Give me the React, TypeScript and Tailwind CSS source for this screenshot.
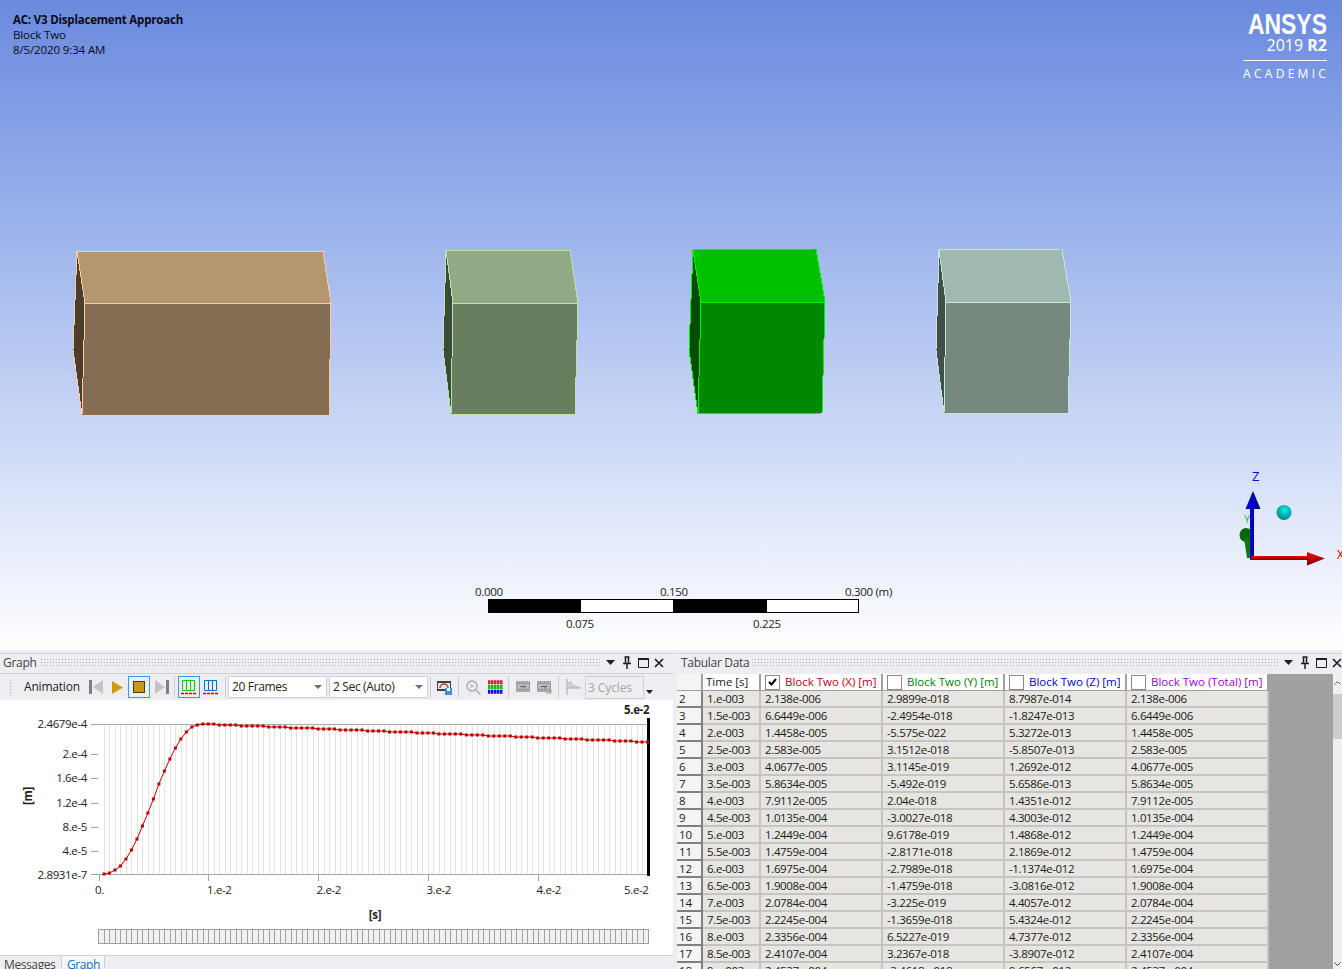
const rows = [
  ["2", "1.e-003", "2.138e-006", "2.9899e-018", "8.7987e-014", "2.138e-006"],
  ["3", "1.5e-003", "6.6449e-006", "-2.4954e-018", "-1.8247e-013", "6.6449e-006"],
  ["4", "2.e-003", "1.4458e-005", "-5.575e-022", "5.3272e-013", "1.4458e-005"],
  ["5", "2.5e-003", "2.583e-005", "3.1512e-018", "-5.8507e-013", "2.583e-005"],
  ["6", "3.e-003", "4.0677e-005", "3.1145e-019", "1.2692e-012", "4.0677e-005"],
  ["7", "3.5e-003", "5.8634e-005", "-5.492e-019", "5.6586e-013", "5.8634e-005"],
  ["8", "4.e-003", "7.9112e-005", "2.04e-018", "1.4351e-012", "7.9112e-005"],
  ["9", "4.5e-003", "1.0135e-004", "-3.0027e-018", "4.3003e-012", "1.0135e-004"],
  ["10", "5.e-003", "1.2449e-004", "9.6178e-019", "1.4868e-012", "1.2449e-004"],
  ["11", "5.5e-003", "1.4759e-004", "-2.8171e-018", "2.1869e-012", "1.4759e-004"],
  ["12", "6.e-003", "1.6975e-004", "-2.7989e-018", "-1.1374e-012", "1.6975e-004"],
  ["13", "6.5e-003", "1.9008e-004", "-1.4759e-018", "-3.0816e-012", "1.9008e-004"],
  ["14", "7.e-003", "2.0784e-004", "-3.225e-019", "4.4057e-012", "2.0784e-004"],
  ["15", "7.5e-003", "2.2245e-004", "-1.3659e-018", "5.4324e-012", "2.2245e-004"],
  ["16", "8.e-003", "2.3356e-004", "6.5227e-019", "4.7377e-012", "2.3356e-004"],
  ["17", "8.5e-003", "2.4107e-004", "3.2367e-018", "-3.8907e-012", "2.4107e-004"],
  ["18", "9.e-003", "2.4537e-004", "-3.4618e-018", "9.6567e-012", "2.4537e-004"],
]

const rise = [2.8931e-7, 2.138e-6, 6.6449e-6, 1.4458e-5, 2.583e-5, 4.0677e-5, 5.8634e-5, 7.9112e-5, 1.0135e-4, 1.2449e-4, 1.4759e-4, 1.6975e-4, 1.9008e-4, 2.0784e-4, 2.2245e-4, 2.3356e-4, 2.4107e-4, 2.4537e-4, 2.4679e-4]

const px = (i: number) => 104 + i * 5.49
const yOf = (v: number) => 874.5 - (v / 2.4679e-4) * 150.5

// total displacement points, 0.5 ms apart
const points = Array.from({ length: 100 }, (_, i) => {
  const x = px(i)
  if (i < rise.length) return [x, Math.round(yOf(rise[i]))]
  return [x, Math.round(724 + ((x - px(18)) / (648 - px(18))) * 18)]
})

const grid = "grid grid-cols-[26px_58px_122px_122px_122px_142px]"
const cell = "h-[17px] pl-[4px] leading-[16px] tracking-[-0.35px] bg-[#e6e5e1] border-r-2 border-b-2 border-[#c4c4c0] overflow-hidden whitespace-nowrap"

function Triangle() {
  return (
    <svg width="9" height="5" viewBox="0 0 9 5">
      <path d="M0 0h9L4.500 5z" fill="#1e1e1e" />
    </svg>
  )
}

function PanelTitle({ title, start, width, dots }: { title: string; start: string; width: string; dots: string }) {
  return (
    <div className="h-[17px] flex items-center text-[12px] text-[#444]">
      <span className={`${start} ${width} mr-[5px] shrink-0 whitespace-nowrap tracking-[-0.3px]`}>{title}</span>
      <div className={`${dots} shrink-0 h-[9px] bg-[radial-gradient(#a8aab4_0.7px,transparent_0.9px)] bg-size-[3px_3px]`} />
      <div className="ml-[5px]"><Triangle /></div>
      <svg className="ml-[7px]" width="10" height="13" viewBox="0 0 10 13">
        <path d="M2.500 1h5M3.500 1v6M6.500 1v6M1 7.500h8M5 8v5" stroke="#1e1e1e" strokeWidth="1.500" fill="none" />
      </svg>
      <svg className="ml-[6px]" width="11" height="10" viewBox="0 0 11 10">
        <path d="M.5 1.500h10v8H.5z" stroke="#1e1e1e" fill="none" />
        <path d="M0 1h11" stroke="#1e1e1e" strokeWidth="2" />
      </svg>
      <svg className="ml-[5px]" width="10" height="10" viewBox="0 0 10 10">
        <path d="M1 1l8 8M9 1l-8 8" stroke="#1e1e1e" strokeWidth="1.700" />
      </svg>
    </div>
  )
}

function Sep({ className }: { className: string }) {
  return <div className={`w-px h-[22px] bg-[#ccced8] ${className}`} />
}

function Select({ label, className }: { label: string; className: string }) {
  return (
    <div className={`w-[99px] h-[22px] bg-white border border-[#ccced8] flex items-center justify-between pl-[3px] pr-[4px] ${className}`}>
      <span className="text-[12px] text-[#222] tracking-[-0.35px]">{label}</span>
      <svg width="8" height="4" viewBox="0 0 8 4"><path d="M0 0h8L4 4z" fill="#707070" /></svg>
    </div>
  )
}

function Film({ className, extra }: { className: string; extra?: boolean }) {
  return (
    <svg className={className} width="15" height="14" viewBox="0 0 15 14">
      <rect x="0" y="1" width="14" height="11" fill="#9a9a9a" />
      <path d="M0 2h14M0 11h14" stroke="#d8d8d8" strokeDasharray="1 1" />
      <rect x="1" y="4" width="12" height="5" fill="#b8b8b8" />
      <path d="M4 6.500h6M8 6.500v2" stroke="#666" />
      {extra && <path d="M9 13h5v-3" stroke="#999" fill="none" />}
    </svg>
  )
}

function Bars({ color }: { color: string }) {
  return (
    <svg width="16" height="16" viewBox="0 0 16 16">
      <path d="M1.500 1.500h12v10h-12zM5.500 1.500v10M9.500 1.500v10" stroke={color} fill="none" />
      <path d="M0 14.500h16" stroke="#e00000" strokeDasharray="3 1" strokeWidth="1.500" />
    </svg>
  )
}

function Toolbar() {
  return (
    <div className="h-[26px] flex items-center bg-[#eeeef2] pl-[9px]">
      <div className="w-[3px] h-[17px] bg-[radial-gradient(#a0a2ac_0.7px,transparent_0.9px)] bg-size-[3px_3px]" />
      <span className="ml-[12px] w-[57px] text-[12px] text-[#222] tracking-[-0.2px] -mt-px">Animation</span>
      <svg className="ml-[8px]" width="14" height="14" viewBox="0 0 14 14">
        <rect x="0" y="0" width="3" height="14" fill="#808080" />
        <path d="M14 0v14L4 7z" fill="#c4c4c4" />
      </svg>
      <svg className="ml-[9px]" width="11" height="13" viewBox="0 0 11 13">
        <path d="M0 0l11 6.500L0 13z" fill="#d09a10" />
      </svg>
      <div className="ml-[5px] w-[22px] h-[22px] border border-[#3399ff] flex items-center justify-center">
        <div className="w-[12px] h-[12px] bg-[#c8981a] border border-[#4a3c10]" />
      </div>
      <svg className="ml-[5px]" width="14" height="14" viewBox="0 0 14 14">
        <path d="M0 0v14l10-7z" fill="#c4c4c4" />
        <rect x="11" y="0" width="3" height="14" fill="#808080" />
      </svg>
      <Sep className="ml-[5px]" />
      <div className="ml-[3px] w-[22px] h-[22px] border border-[#3399ff] flex items-center justify-center">
        <Bars color="#00d000" />
      </div>
      <div className="ml-[3px] w-[16px]"><Bars color="#0070d0" /></div>
      <Sep className="ml-[6px]" />
      <Select label="20 Frames" className="ml-[2px]" />
      <Select label="2 Sec (Auto)" className="ml-[2px]" />
      <Sep className="ml-[2px]" />
      <svg className="ml-[6px]" width="15" height="15" viewBox="0 0 15 15">
        <rect x="0" y="1" width="14" height="10" fill="#404040" />
        <rect x="1" y="3" width="12" height="6" fill="#e8e8e8" />
        <path d="M3 8a4 4 0 0 1 8 0" stroke="#d03030" fill="none" strokeWidth="1.500" />
        <rect x="8" y="8" width="7" height="7" fill="#3b8fe0" />
        <rect x="10" y="8" width="3" height="3" fill="#fff" />
      </svg>
      <Sep className="ml-[6px]" />
      <svg className="ml-[7px]" width="15" height="15" viewBox="0 0 15 15">
        <circle cx="6" cy="6" r="5" stroke="#a8a8a8" fill="none" strokeWidth="1.300" />
        <path d="M10 10l4.500 4.500" stroke="#a8a8a8" strokeWidth="1.500" />
        <path d="M4.500 3.500v5L8.500 6z" fill="#c4c4c4" />
      </svg>
      <svg className="ml-[7px]" width="15" height="14" viewBox="0 0 15 14">
        <path d="M0 2.200h15" stroke="#e02020" strokeWidth="4" strokeDasharray="2.500 .5" />
        <path d="M0 7h15" stroke="#10c010" strokeWidth="4" strokeDasharray="2.500 .5" />
        <path d="M0 11.800h15" stroke="#1010e0" strokeWidth="4" strokeDasharray="2.500 .5" />
      </svg>
      <Sep className="ml-[5px]" />
      <Film className="ml-[7px]" />
      <Film className="ml-[6px]" extra />
      <Sep className="ml-[6px]" />
      <svg className="ml-[7px]" width="15" height="16" viewBox="0 0 15 16">
        <path d="M1 0v16M0 9h15" stroke="#a8a8a8" />
        <path d="M3 9V3M5 9V2M7 9V5M9 9V6M11 9V7M13 9V8" stroke="#b8b8b8" strokeWidth="1.200" />
      </svg>
      <div className="ml-[4px] w-[59px] h-[23px] border border-[#ccced8] pl-[2px] text-[12px] leading-[21px] text-[#a2a4a5] tracking-[-0.1px]">3 Cycles</div>
      <svg className="ml-[2px] mt-[10px]" width="7" height="4" viewBox="0 0 7 4"><path d="M0 0h7L3.500 4z" fill="#1e1e1e" /></svg>
    </div>
  )
}

function Chart() {
  const yTicks: [number, string][] = [
    [724, "2.4679e-4"],
    [754, "2.e-4"],
    [778, "1.6e-4"],
    [803, "1.2e-4"],
    [827, "8.e-5"],
    [851, "4.e-5"],
    [874.5, "2.8931e-7"],
  ]
  const xTicks: [number, string][] = [
    [208.5, "1.e-2"],
    [318, "2.e-2"],
    [428, "3.e-2"],
    [538, "4.e-2"],
  ]
  return (
    <svg width="673" height="229" viewBox="0 700 673 229" className="block" fontSize="11.500" fill="#222" letterSpacing="-0.35">
      {points.map(([x], i) => (
        <path key={i} d={`M${Math.round(x) + 0.5} 724v150`} stroke="#e4e4e4" />
      ))}
      <path d="M91 724.500h557M91 874.500h557" stroke="#a8a8a8" />
      {yTicks.map(([y, t]) => (
        <g key={t}>
          <path d={`M91 ${Math.floor(y) + 0.5}h7`} stroke="#a0a0a0" />
          <text x="87" y={y + 4} textAnchor="end">{t}</text>
        </g>
      ))}
      <path d="M99.500 875v6" stroke="#a0a0a0" />
      <text x="95" y="894">0.</text>
      {xTicks.map(([x, t]) => (
        <g key={t}>
          <path d={`M${Math.floor(x) + 0.5} 875v6`} stroke="#a0a0a0" />
          <text x={x - 1.5} y="894">{t}</text>
        </g>
      ))}
      <text x="624" y="894">5.e-2</text>
      <text x="624" y="714" fontWeight="700">5.e-2</text>
      <path d="M648.500 718v158" stroke="#000" strokeWidth="3" />
      <polyline points={points.map((p) => p.join(",")).join(" ")} fill="none" stroke="#c00000" />
      {points.map(([x, y], i) => (
        <rect key={i} x={x - 1.5} y={y - 1.5} width="3" height="3" fill="#c00000" />
      ))}
      <text x="0" y="0" fontWeight="700" textAnchor="middle" transform="translate(32 796) rotate(-90)">[m]</text>
      <text x="375" y="919" fontWeight="700" textAnchor="middle">[s]</text>
    </svg>
  )
}

function Block({ top, front, left, edge, pts }: { top: string; front: string; left: string; edge: string; pts: number[][] }) {
  const [a, b, c, d, e, f, g] = pts
  const str = (l: number[][]) => l.map((p) => p.join(",")).join(" ")
  return (
    <g stroke={edge} strokeLinejoin="round">
      <polygon points={str([a, d, e, g])} fill={left} />
      <polygon points={str([a, b, c, d])} fill={top} />
      <polygon points={str([d, c, f, e])} fill={front} />
    </g>
  )
}

function Model() {
  return (
    <svg className="absolute top-0 left-0" width="1342" height="650" viewBox="0 0 1342 650" shapeRendering="crispEdges">
      <Block top="#b49670" front="#846d52" left="#4c3e2d" edge="#ffcb9c"
        pts={[[77, 251], [323, 251], [331, 303], [85, 303], [82, 415], [329, 415], [73, 350]]} />
      <Block top="#91aa85" front="#697d5f" left="#3d4a38" edge="#b8e6a8"
        pts={[[446, 250], [570, 250], [578, 303], [453, 303], [451, 414], [575, 414], [443, 350]]} />
      <Block top="#00c000" front="#008800" left="#004d00" edge="#00f000"
        pts={[[693, 250], [816, 249], [825, 302], [701, 302], [698, 414], [822, 413], [689, 350]]} />
      <Block top="#a0b9b0" front="#75897f" left="#414e49" edge="#c4e6da"
        pts={[[939, 250], [1062, 249], [1071, 302], [946, 302], [944, 413], [1068, 413], [936, 350]]} />
    </svg>
  )
}

function Triad() {
  return (
    <svg className="absolute top-[460px] left-[1200px]" width="142" height="120" viewBox="1200 460 142 120" fontSize="12">
      <defs>
        <radialGradient id="ball" cx="0.55" cy="0.35" r="0.7">
          <stop offset="0" stopColor="#00f0f0" />
          <stop offset="1" stopColor="#007a80" />
        </radialGradient>
        <linearGradient id="zaxis" x1="0" x2="1" y1="0" y2="0">
          <stop offset="0" stopColor="#0000f0" />
          <stop offset="1" stopColor="#000080" />
        </linearGradient>
        <linearGradient id="xaxis" x1="0" x2="0" y1="0" y2="1">
          <stop offset="0" stopColor="#f00000" />
          <stop offset="1" stopColor="#800000" />
        </linearGradient>
      </defs>
      <text x="1252" y="481" fill="#0000e0" fontSize="13">Z</text>
      <text x="1244" y="523" fill="#10c040" fontSize="11">Y</text>
      <text x="1337" y="559" fill="#e00000">X</text>
      <circle cx="1284" cy="512.500" r="7.500" fill="url(#ball)" />
      <ellipse cx="1246" cy="535" rx="6.500" ry="7" fill="#0a650a" />
      <path d="M1244 538h6v20h-3z" fill="#0a7a0a" />
      <rect x="1250" y="500" width="4" height="60" fill="url(#zaxis)" />
      <path d="M1253 491l7.500 18h-15z" fill="url(#zaxis)" />
      <rect x="1251" y="556" width="58" height="4" fill="url(#xaxis)" />
      <path d="M1307 552l18 6.500-18 7z" fill="url(#xaxis)" />
    </svg>
  )
}

function ScaleBar() {
  return (
    <div className="absolute top-[585px] left-[472px] w-[425px] text-[11.5px] tracking-[-0.3px] text-[#222]">
      <div className="h-[14px] flex leading-[14px]">
        <span className="w-[188px] pl-[3px]">0.000</span>
        <span className="w-[185px]">0.150</span>
        <span>0.300 (m)</span>
      </div>
      <div className="ml-[16px] w-[371px] h-[14px] flex border border-black bg-white">
        <div className="w-[92px] bg-black" />
        <div className="w-[92px]" />
        <div className="w-[94px] bg-black" />
      </div>
      <div className="h-[14px] mt-[4px] flex leading-[14px]">
        <span className="ml-[94px] w-[187px]">0.075</span>
        <span>0.225</span>
      </div>
    </div>
  )
}

function Checkbox({ checked }: { checked?: boolean }) {
  return (
    <div className="w-[15px] h-[15px] bg-white border border-[#8a8a8a] flex items-center justify-center shrink-0">
      {checked && (
        <svg width="9" height="8" viewBox="0 0 9 8">
          <path d="M1 4l2.500 2.500L8 1" stroke="#000" strokeWidth="2" fill="none" />
        </svg>
      )}
    </div>
  )
}

function HeadCell({ label, color, checked }: { label: string; color: string; checked?: boolean }) {
  return (
    <div className="h-[17px] bg-white border-r-2 border-b border-[#a0a0a0] flex items-center pl-[4px] gap-[5px] overflow-hidden whitespace-nowrap">
      <Checkbox checked={checked} />
      <span className={`${color} -mt-px`}>{label}</span>
    </div>
  )
}

export default function App() {
  return (
    <div className="w-[1342px] h-[969px] overflow-hidden flex flex-col font-['Open_Sans',sans-serif]">
      <div className="relative h-[650px] shrink-0 bg-gradient-to-b from-[#6a8ade] to-white">
        <div className="absolute top-[12px] left-[13px] text-[11.5px] leading-[15px] tracking-[-0.12px] text-[#0a0a14]">
          <div className="font-bold tracking-[-0.2px]">AC: V3 Displacement Approach</div>
          <div>Block Two</div>
          <div>8/5/2020 9:34 AM</div>
        </div>
        <div className="absolute top-[10px] right-[15px] w-[84px] flex flex-col items-end text-white">
          <div className="text-[29px] leading-[28px] font-bold font-['Liberation_Sans',sans-serif] origin-right scale-x-[0.79] whitespace-nowrap">ANSYS</div>
          <div className="text-[16px] leading-[15px]">2019 <span className="font-bold">R2</span></div>
          <div className="w-full h-px bg-white mt-[7px]" />
          <div className="w-full text-[12px] leading-[14px] mt-[6px] tracking-[3.300px] whitespace-nowrap">ACADEMIC</div>
        </div>
        <Model />
        <Triad />
        <ScaleBar />
      </div>

      <div className="flex-1 min-h-0 flex bg-[#eeeef2] pt-[3px] overflow-hidden">
        <div className="w-[673px] shrink-0 flex flex-col border-t border-[#ccced8]">
          <PanelTitle title="Graph" start="ml-[3px]" width="w-[32px]" dots="w-[561px]" />
          <div className="h-[3px] border-b border-[#ccced8]" />
          <Toolbar />
          <div className="bg-white h-[256px] flex flex-col">
            <Chart />
            <div className="ml-[98px] w-[551px] h-[15px] flex border border-[#a0a0a0] bg-[#f0f0f0] border-r-0">
              {Array.from({ length: 100 }, (_, i) => (
                <div key={i} className="flex-1 border-r border-[#a0a0a0]" />
              ))}
            </div>
          </div>
          <div className="h-[13px] flex text-[12px] leading-[17px] border-t border-[#ccced8] -mt-px tracking-[-0.4px]">
            <div className="w-[62px] pl-[4px] border-r border-[#ccced8] text-[#444]">Messages</div>
            <div className="w-[43px] pl-[5px] border-r border-[#ccced8] bg-[#f5f6f8] text-[#1a70c0]">Graph</div>
          </div>
        </div>

        <div className="ml-[3px] flex-1 min-w-0 flex flex-col border-t border-[#ccced8]">
          <PanelTitle title="Tabular Data" start="ml-[5px]" width="w-[65px]" dots="w-[528px]" />
          <div className="h-[3px]" />
          <div className="flex flex-1 min-h-0 overflow-hidden ml-[1px]">
            <div className="w-[592px] shrink-0 text-[11.5px] text-[#1a1a1a]">
              <div className={grid}>
                <div className="h-[17px] bg-[#f4f4f4] border-r-2 border-b border-[#a0a0a0]" />
                <div className="h-[17px] bg-white border-r-2 border-b border-[#a0a0a0] pl-[3px] leading-[15px]">Time [s]</div>
                <HeadCell label="Block Two (X) [m]" color="text-[#c00020]" checked />
                <HeadCell label="Block Two (Y) [m]" color="text-[#008000]" />
                <HeadCell label="Block Two (Z) [m]" color="text-[#0000d0]" />
                <HeadCell label="Block Two (Total) [m]" color="text-[#a000d0]" />
              </div>
              {rows.map((r) => (
                <div key={r[0]} className={grid}>
                  <div className="h-[17px] pl-[2px] leading-[16px] bg-[#f4f4f4] border-r-2 border-b-2 border-[#808080]">{r[0]}</div>
                  {r.slice(1).map((v, i) => (
                    <div key={i} className={cell}>{v}</div>
                  ))}
                </div>
              ))}
            </div>
            <div className="flex-1 bg-[#a0a0a0]" />
            <div className="w-[9px] bg-[#f0f0f0] flex flex-col items-center pt-[6px]">
              <svg width="7" height="5" viewBox="0 0 7 5"><path d="M.5 4.500l3-3 3 3" stroke="#606060" fill="none" /></svg>
              <div className="mt-[9px] w-full h-[45px] bg-[#cdcdcd]" />
              <svg className="mt-auto mb-[2px]" width="7" height="5" viewBox="0 0 7 5"><path d="M.5.500l3 3 3-3" stroke="#404040" fill="none" /></svg>
            </div>
          </div>
        </div>
      </div>
    </div>
  )
}
